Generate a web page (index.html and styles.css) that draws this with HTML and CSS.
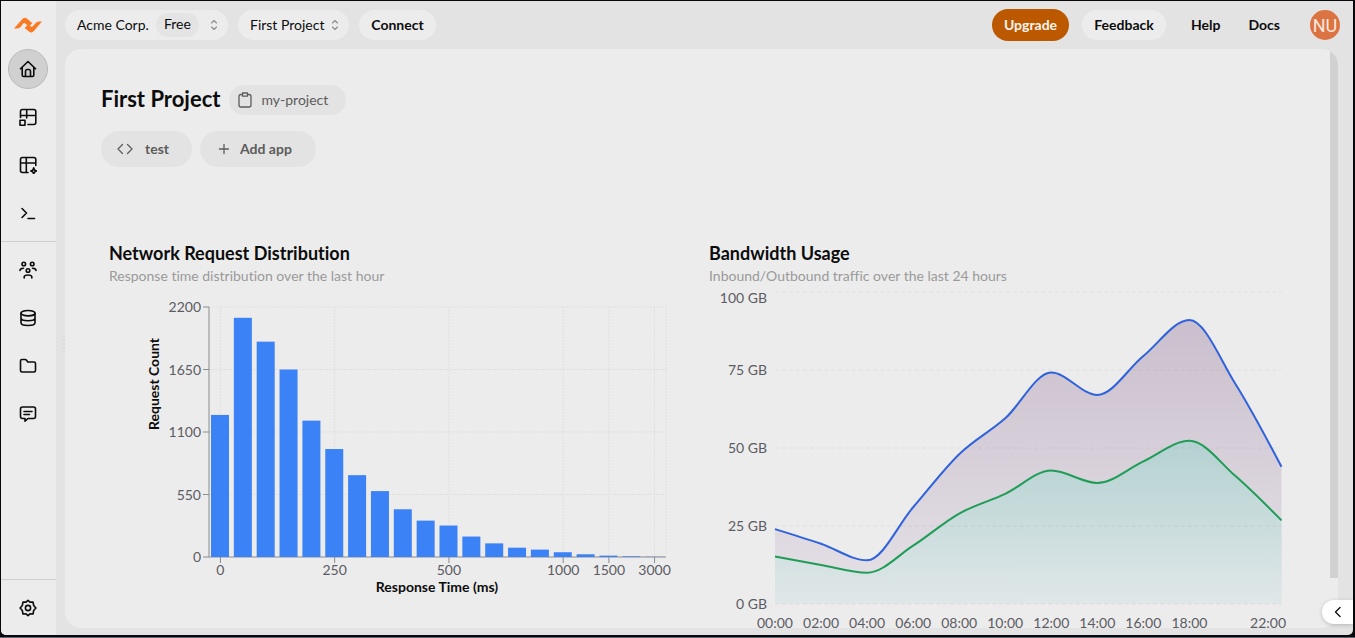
FILE: index.html
```html
<!DOCTYPE html>
<html lang="en">
<head>
<meta charset="utf-8">
<title>First Project</title>
<link rel="stylesheet" href="styles.css">
</head>
<body>
<div class="window">
  <nav class="sidebar" aria-label="Main">
    <a class="logo" href="#" aria-label="Dashboard">
      <svg width="28" height="16" viewBox="0 0 28 16" fill="#fa7a24"><path d="M0 11.600L8.400 1.900Q10.400 0 12.600 1.300L17.300 5.200L13.900 8.700L10.900 6.300Q10 5.700 9.200 6.500L6.500 9.900Q4.900 11.600 2.800 11.600Z"/><path d="M28 4.600L19.600 14.200Q17.500 16.300 15.200 14.800L10.700 11L14.200 7.500L16.800 9.500Q17.900 10.200 18.800 9.200L21.400 6.300Q23 4.600 25 4.600Z"/><path d="M13 8.200L17.300 5.200L18.300 6.200L14.200 10.200Z"/></svg>
    </a>
    <a class="nav-item nav-item-active" href="#" aria-label="Home"><svg class="icon" viewBox="0 0 18 18"><path d="M1.500 8.800L9 1.500L16.500 8.800M3.200 7.500V15Q3.200 16.500 4.700 16.500H13.300Q14.800 16.500 14.800 15V7.500M6.500 16V11.200Q6.500 9.500 8 9.500H10Q11.500 9.500 11.500 11.200V16"/></svg></a>
    <a class="nav-item" href="#" aria-label="Tables"><svg class="icon" viewBox="0 0 18 18"><path d="M1.500 9.500V3.500Q1.500 1.500 3.500 1.500H14.800Q16.800 1.500 16.800 3.500V14.500Q16.800 16.500 14.800 16.500H9M1.500 7.500H16.800M7.700 1.500V10M1 12.300H6V17.200H1Z"/></svg></a>
    <a class="nav-item" href="#" aria-label="Table assistant"><svg class="icon" viewBox="0 0 18 18"><path d="M9 16.500H3.500Q1.500 16.500 1.500 14.500V3.500Q1.500 1.500 3.500 1.500H14.800Q16.800 1.500 16.800 3.500V9.500M1.500 7H16.800M7.300 1.500V16.500M14.700 11.800Q15.100 14.600 17.600 15Q15.100 15.400 14.700 18Q14.300 15.400 11.800 15Q14.300 14.600 14.700 11.800Z"/></svg></a>
    <a class="nav-item" href="#" aria-label="Terminal"><svg class="icon" viewBox="0 0 18 18"><path d="M3 4.500L7.500 9L3 13.500M9 14.500H15.500"/></svg></a>
    <hr class="nav-rule">
    <a class="nav-item" href="#" aria-label="Team"><svg class="icon" viewBox="0 0 18 18"><circle cx="4.800" cy="3" r="1.800"/><circle cx="13.200" cy="3" r="1.800"/><circle cx="9" cy="9.500" r="1.800"/><path d="M1 9.500Q1 7.200 4.500 7.200M17 9.500Q17 7.200 13.500 7.200M5.200 17V15.500Q5.800 14 9 14Q12.200 14 12.800 15.500V17"/></svg></a>
    <a class="nav-item" href="#" aria-label="Databases"><svg class="icon" viewBox="0 0 18 18"><ellipse cx="9" cy="4.200" rx="7" ry="2.700"/><path d="M2 4.200V13.800C2 17.400 16 17.400 16 13.800V4.200M2 9C2 12.600 16 12.600 16 9"/></svg></a>
    <a class="nav-item" href="#" aria-label="Files"><svg class="icon" viewBox="0 0 18 18"><path d="M1.500 4Q1.500 2.500 3 2.500H6.200Q7 2.500 7.500 3.200L8.800 5H15Q16.500 5 16.500 6.500V13.500Q16.500 15 15 15H3Q1.500 15 1.500 13.500Z"/></svg></a>
    <a class="nav-item" href="#" aria-label="Messages"><svg class="icon" viewBox="0 0 18 18"><path d="M3.500 2H14.500Q16.500 2 16.500 4V11.500Q16.500 13.500 14.500 13.500H9L6 16.200V13.500H3.500Q1.500 13.500 1.500 11.500V4Q1.500 2 3.500 2ZM5 6.500H13M5 9.500H10.500"/></svg></a>
    <div class="nav-footer">
      <a class="nav-item" href="#" aria-label="Settings"><svg class="icon" viewBox="0 0 18 18"><path d="M9 1.300L11 3.100L14 3L14.700 6.500L16.900 9L14.700 11.500L14 15L11 14.900L9 16.700L7 14.900L4 15L3.300 11.500L1.100 9L3.300 6.500L4 3L7 3.100Z"/><circle cx="9" cy="9" r="2.600"/></svg></a>
    </div>
  </nav>

  <div class="workspace">
    <header class="topbar">
      <button class="pill pill-org" type="button"><span>Acme Corp.</span><span class="plan">Free</span><svg class="switch" viewBox="0 0 8 12"><path d="M1.500 4L4 1.500L6.500 4M1.500 8L4 10.500L6.500 8"/></svg></button>
      <button class="pill pill-project" type="button"><span>First Project</span><svg class="switch" viewBox="0 0 8 12"><path d="M1.500 4L4 1.500L6.500 4M1.500 8L4 10.500L6.500 8"/></svg></button>
      <button class="pill pill-strong" type="button">Connect</button>
      <div class="topbar-end">
        <button class="upgrade" type="button">Upgrade</button>
        <button class="pill pill-strong pill-feedback" type="button">Feedback</button>
        <a class="top-link" href="#">Help</a>
        <a class="top-link" href="#">Docs</a>
        <button class="avatar" type="button" aria-label="Account">NU</button>
      </div>
    </header>

    <main class="panel">
      <div class="content">
        <div class="heading">
          <h1>First Project</h1>
          <button class="slug" type="button"><svg width="14" height="16" viewBox="0 0 14 16"><path d="M4.500 2.500H3Q1 2.500 1 4.500V13Q1 15 3 15H11Q13 15 13 13V4.500Q13 2.500 11 2.500H9.500M4.500 1H9.500V4.200H4.500Z"/></svg><span>my-project</span></button>
        </div>
        <div class="apps">
          <button class="app" type="button"><svg width="16" height="12" viewBox="0 0 16 12"><path d="M5.500 1.500L1 6L5.500 10.500M10.500 1.500L15 6L10.500 10.500"/></svg><span>test</span></button>
          <button class="app app-add" type="button"><svg width="12" height="12" viewBox="0 0 12 12"><path d="M6 1.500V10.500M1.500 6H10.500"/></svg><span>Add app</span></button>
        </div>
        <div class="charts">
          <section class="chart-card">
            <h2>Network Request Distribution</h2>
            <p>Response time distribution over the last hour</p>
            <svg class="chart" id="requests" viewBox="0 0 577 343" role="img" aria-label="Network request distribution"></svg>
          </section>
          <section class="chart-card">
            <h2>Bandwidth Usage</h2>
            <p>Inbound/Outbound traffic over the last 24 hours</p>
            <svg class="chart" id="bandwidth" viewBox="0 0 577 343" role="img" aria-label="Bandwidth usage">
              <defs>
                <linearGradient id="outFill" x1="0" y1="0" x2="0" y2="1"><stop offset="0" stop-color="#cabfcd"/><stop offset="1" stop-color="#e5e2e7"/></linearGradient>
                <linearGradient id="inFill" x1="0" y1="0" x2="0" y2="1"><stop offset="0" stop-color="#b4d1d1"/><stop offset="1" stop-color="#e0e7e8"/></linearGradient>
              </defs>
            </svg>
          </section>
        </div>
      </div>
      <div class="scroll-track" aria-hidden="true"><div class="scroll-thumb"></div></div>
    </main>
    <div class="resize-handle" aria-hidden="true"><i></i><i></i><i></i></div>
  </div>
  <button class="drawer-toggle" type="button" aria-label="Open drawer"><svg width="8" height="12" viewBox="0 0 8 12"><path d="M6 1.500L1.500 6L6 10.500"/></svg></button>
</div>
<script src="charts.js"></script>
</body>
</html>
```
FILE: styles.css
```css
* { box-sizing: border-box; }
body {
  margin: 0;
  height: 100vh;
  padding: 1px 2px 2px 1px;
  background: #08080a;
  border-bottom: 1px solid #5c6878;
  font-family: Lato, "Liberation Sans", sans-serif;
  font-size: 14px;
  font-variant-ligatures: none;
  color: #0c0c0d;
}
button { font: inherit; font-variant-ligatures: none; color: inherit; border: 0; padding: 0; cursor: pointer; white-space: nowrap; }
a { color: inherit; text-decoration: none; }
h1, h2, p { margin: 0; }
svg { display: block; flex: none; }

.window {
  position: relative;
  display: flex;
  height: 100%;
  background: #e3e3e3;
  border-radius: 0 0 5px 5px;
  overflow: hidden;
}

.sidebar {
  width: 55px;
  flex: none;
  display: flex;
  flex-direction: column;
  gap: 8px;
  background: #ececec;
}
.logo { height: 40px; display: flex; align-items: center; padding: 8px 0 0 13px; }
.nav-item {
  width: 40px;
  height: 40px;
  flex: none;
  margin-left: 7px;
  display: grid;
  place-items: center;
  border-radius: 50%;
}
.nav-item-active { background: #d0d0d0; border: 1px solid #bababa; }
.icon {
  width: 18px;
  height: 18px;
  fill: none;
  stroke: #0c0c0d;
  stroke-width: 1.6;
  stroke-linecap: round;
  stroke-linejoin: round;
}
.nav-rule { width: 100%; height: 1px; flex: none; margin: 0; border: 0; background: #cfcfcf; }
.nav-footer {
  margin-top: auto;
  padding: 8px 0 7px;
  border-top: 1px solid #cfcfcf;
}

.workspace {
  position: relative;
  flex: 1;
  min-width: 0;
  display: flex;
  flex-direction: column;
  padding: 0 15px 7px 9px;
}
.topbar { height: 48px; flex: none; display: flex; align-items: center; gap: 10px; }
.topbar-end { margin-left: auto; display: flex; align-items: center; }
.pill {
  height: 30px;
  display: flex;
  align-items: center;
  padding: 0 12px 2px;
  border-radius: 15px;
  background: #ececec;
}
.pill-org { width: 163px; padding-right: 10px; }
.plan {
  height: 24px;
  line-height: 22px;
  margin: 2px 0 0 7px;
  padding: 0 8px;
  border-radius: 12px;
  background: #e4e4e4;
}
.pill-project { width: 111px; padding-right: 10px; }
.switch {
  width: 8px;
  height: 12px;
  margin: 2px 0 0 auto;
  fill: none;
  stroke: #8a8a8a;
  stroke-width: 1.1;
  stroke-linecap: round;
  stroke-linejoin: round;
}
.pill-strong { width: 77px; justify-content: center; font-weight: 700; }
.pill-feedback { width: 84px; margin: 0 13px; }
.upgrade {
  width: 77px;
  height: 32px;
  padding-bottom: 2px;
  border-radius: 16px;
  background: #bb5800;
  color: #fdf5ee;
  font-weight: 700;
}
.top-link { padding: 0 12px 2px; margin-right: 4px; font-weight: 700; }
.avatar {
  width: 30px;
  height: 30px;
  margin: 0 -2px 0 14px;
  border-radius: 50%;
  background: #db7343;
  color: #fbe9df;
  font-family: Roboto, sans-serif;
  font-size: 18px;
}

.panel {
  flex: 1;
  min-height: 0;
  display: flex;
  background: #ececec;
  border-radius: 16px;
}
.content { flex: 1; min-width: 0; padding: 36px 36px 0; }
.scroll-track { width: 16px; flex: none; margin-left: -8px; border-radius: 0 16px 16px 0; overflow: hidden; }
.scroll-thumb { height: 91.4%; margin-left: 8px; background: #d1d1d1; }

.heading { display: flex; align-items: center; gap: 9px; height: 30px; }
.heading h1 { font-size: 22px; line-height: 28px; padding-bottom: 2px; font-weight: 700; }
.slug {
  width: 117px;
  height: 30px;
  display: flex;
  align-items: center;
  gap: 9px;
  padding: 0 9px;
  border-radius: 15px;
  background: #e3e3e3;
  color: #5c5c5c;
}
.slug span, .app span { padding-bottom: 2px; }
.slug svg, .app svg, .drawer-toggle svg {
  fill: none;
  stroke: currentColor;
  stroke-width: 1.3;
  stroke-linecap: round;
  stroke-linejoin: round;
}
.apps { display: flex; gap: 8px; margin-top: 16px; }
.app {
  width: 91px;
  height: 36px;
  display: flex;
  align-items: center;
  gap: 12px;
  padding: 0 16px;
  border-radius: 18px;
  background: #e3e3e3;
  color: #5c5c5c;
  font-weight: 700;
}
.app-add { width: 116px; padding: 0 18px; gap: 10px; }

.charts { display: grid; grid-template-columns: 1fr 1fr; gap: 7px; margin-top: 64px; }
.chart-card { min-width: 0; padding: 8px; }
.chart-card h2 { font-size: 18px; line-height: 28px; font-weight: 700; }
.chart-card p { font-size: 14px; line-height: 18px; color: #9a9a9a; white-space: nowrap; }
.chart { width: 100%; height: auto; overflow: visible; }
.chart text { font-size: 14px; fill: #5b5b63; }
.chart .axis-title { font-weight: 700; fill: #0c0c0d; }
.grid-dotted { stroke: #e0e0e0; stroke-dasharray: 2 1; }
.grid-dashed { stroke: #000; stroke-opacity: 0.05; stroke-dasharray: 4 3; }
.axis { stroke: #8c8c8c; stroke-width: 1; }
.bar { fill: #3b82f6; }
.line { fill: none; stroke-width: 2; }
.line-out { stroke: #2f62dc; }
.line-in { stroke: #1f9d57; }
.area-out { fill: url(#outFill); }
.area-in { fill: url(#inFill); }

.resize-handle {
  position: absolute;
  left: 7px;
  top: 338px;
  display: grid;
  gap: 2px;
}
.resize-handle i { width: 2px; height: 2px; background: #d6d6d6; border-radius: 50%; }
.drawer-toggle {
  position: absolute;
  right: 0;
  bottom: 11px;
  width: 31px;
  height: 24px;
  display: grid;
  place-items: center;
  border-radius: 12px 0 0 12px;
  background: #fff;
  box-shadow: 0 1px 4px rgba(0, 0, 0, 0.2);
}
```
FILE: charts.js
```js
const NS = "http://www.w3.org/2000/svg";

function add(parent, tag, attrs, text) {
  const el = document.createElementNS(NS, tag);
  for (const key in attrs) el.setAttribute(key, attrs[key]);
  if (text !== undefined) el.textContent = text;
  parent.appendChild(el);
}
function line(svg, cls, x1, y1, x2, y2) {
  add(svg, "line", { class: cls, x1, y1, x2, y2 });
}

// Monotone cubic interpolation through the points.
function monotone(pts) {
  const n = pts.length, d = [], m = [];
  for (let i = 0; i < n - 1; i++) d.push((pts[i + 1][1] - pts[i][1]) / (pts[i + 1][0] - pts[i][0]));
  for (let i = 1; i < n - 1; i++) {
    m[i] = d[i - 1] * d[i] <= 0 ? 0
      : Math.sign(d[i]) * 2 * Math.min(Math.abs(d[i - 1]), Math.abs(d[i]), Math.abs(d[i - 1] + d[i]) / 4);
  }
  m[0] = (3 * d[0] - m[1]) / 2;
  m[n - 1] = (3 * d[n - 2] - m[n - 2]) / 2;
  let path = "M" + pts[0];
  for (let i = 0; i < n - 1; i++) {
    const [x0, y0] = pts[i], [x1, y1] = pts[i + 1], h = (x1 - x0) / 3;
    path += `C${x0 + h},${y0 + m[i] * h} ${x1 - h},${y1 - m[i + 1] * h} ${x1},${y1}`;
  }
  return path;
}

function drawRequests() {
  const svg = document.getElementById("requests");
  const left = 100, right = 557, top = 22, bottom = 272;
  const counts = [1250, 2105, 1895, 1650, 1200, 950, 720, 580, 420, 320, 277, 180, 120, 82, 65, 42, 24, 12, 6, 2];
  const labels = { 0: "0", 5: "250", 10: "500", 15: "1000", 17: "1500", 19: "3000" };
  const step = (right - left) / counts.length;
  const y = v => bottom - v / 2200 * (bottom - top);
  const ticks = [0, 550, 1100, 1650, 2200];
  ticks.slice(1).forEach(v => line(svg, "grid-dotted", left, y(v), right, y(v)));
  Object.keys(labels).forEach(i => line(svg, "grid-dotted", left + step * (+i + 0.5), top, left + step * (+i + 0.5), bottom));
  line(svg, "grid-dotted", right, top, right, bottom);
  line(svg, "axis", left, top, left, bottom);
  line(svg, "axis", left, bottom, right, bottom);
  counts.forEach((v, i) => add(svg, "rect", { class: "bar", x: left + step * i + 2, y: y(v), width: 18, height: bottom - y(v) }));
  ticks.forEach(v => {
    line(svg, "axis", left - 6, y(v), left, y(v));
    add(svg, "text", { x: left - 8, y: y(v) + 5, "text-anchor": "end" }, v);
  });
  Object.entries(labels).forEach(([i, label]) => {
    const x = left + step * (+i + 0.5);
    line(svg, "axis", x, bottom, x, bottom + 6);
    add(svg, "text", { x, y: bottom + 18, "text-anchor": "middle" }, label);
  });
  add(svg, "text", { class: "axis-title", x: 328, y: bottom + 35, "text-anchor": "middle" }, "Response Time (ms)");
  add(svg, "text", { class: "axis-title", transform: "translate(50 99) rotate(-90)", "text-anchor": "middle" }, "Request Count");
}

function drawBandwidth() {
  const svg = document.getElementById("bandwidth");
  const left = 66, right = 572.5, top = 7, bottom = 319;
  const outbound = [24, 19.3, 14, 31, 48, 59.5, 74.2, 67, 79.5, 91, 70.5, 44];
  const inbound = [15.2, 12.5, 10, 18.7, 29, 35.3, 42.8, 38.8, 45.7, 52.3, 41, 26.8];
  const step = (right - left) / 11;
  const y = v => bottom - v / 100 * (bottom - top);
  [["out", outbound], ["in", inbound]].forEach(([name, values]) => {
    const path = monotone(values.map((v, i) => [left + i * step, y(v)]));
    add(svg, "path", { class: "area-" + name, d: `${path}L${right},${bottom}L${left},${bottom}Z` });
    add(svg, "path", { class: "line line-" + name, d: path });
  });
  [0, 25, 50, 75, 100].forEach(v => {
    line(svg, "grid-dashed", left, y(v), right, y(v));
    add(svg, "text", { x: left - 8, y: v === 100 ? 18 : y(v) + 5, "text-anchor": "end" }, v + " GB");
  });
  for (let i = 0; i < 12; i++) {
    if (i === 10) continue;
    const last = i === 11;
    add(svg, "text", { x: last ? 577 : left + i * step, y: bottom + 24, "text-anchor": last ? "end" : "middle" }, String(i * 2).padStart(2, "0") + ":00");
  }
}

drawRequests();
drawBandwidth();
```
